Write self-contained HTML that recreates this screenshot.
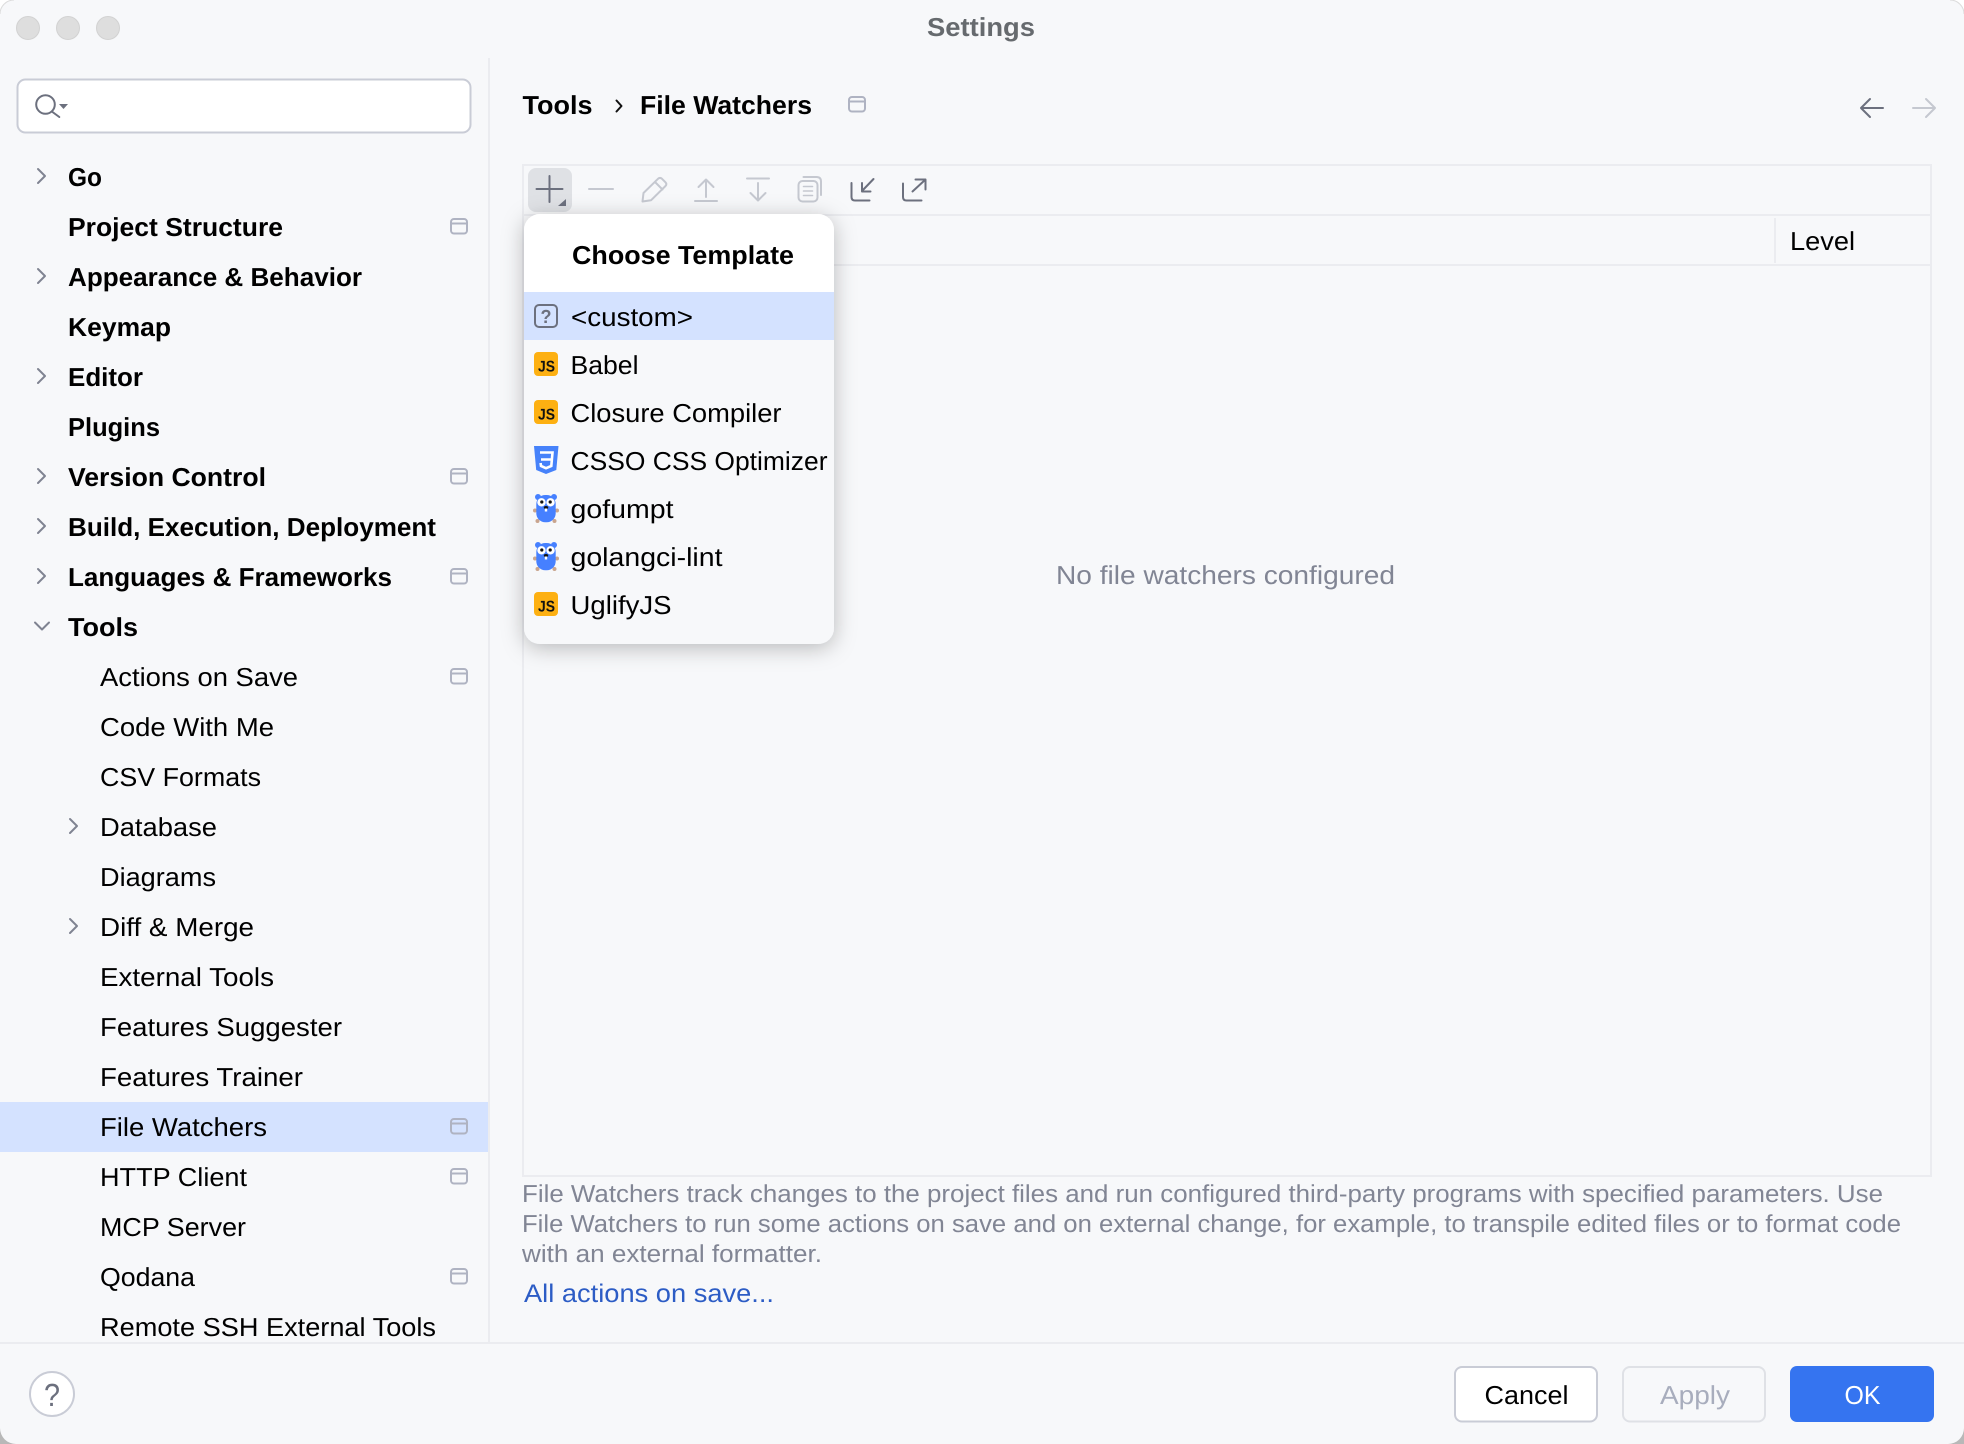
<!DOCTYPE html>
<html lang="en">
<head>
<meta charset="utf-8">
<title>Settings</title>
<style>
html,body{margin:0;padding:0;background:#f7f8fa;width:1964px;height:1444px;overflow:hidden}
svg{display:block}
text{font-family:"Liberation Sans",sans-serif;font-size:26px;fill:#000;text-rendering:geometricPrecision}
.b{font-weight:700}
.g{fill:#818594}
.d{font-size:24.5px;fill:#818594}
.ico{fill:none;stroke:#6c707e;stroke-width:2;stroke-linecap:round;stroke-linejoin:round}
.dis{fill:none;stroke:#c5c8d0;stroke-width:2;stroke-linecap:round;stroke-linejoin:round}
.chev{fill:none;stroke:#7f8391;stroke-width:2;stroke-linecap:round;stroke-linejoin:round}
.bm{fill:none;stroke:#afb3c2;stroke-width:2}
.sep{fill:#ebecf0}
.js{font-size:15.5px;font-weight:700;fill:#111}
</style>
</head>
<body>
<svg xmlns="http://www.w3.org/2000/svg" width="1964" height="1444" viewBox="0 0 1964 1444">
<defs>
<filter id="sh" x="-20%" y="-20%" width="140%" height="140%">
<feDropShadow dx="0" dy="4" stdDeviation="11" flood-color="#000" flood-opacity=".26"/>
</filter>
</defs>
<rect width="1964" height="1444" fill="#f7f8fa"/>

<!-- window corners -->
<path d="M0 0H14A14 14 0 0 0 0 14Z" fill="#fff"/>
<path d="M14 0A14 14 0 0 0 0 14" fill="none" stroke="#dcdcdc"/>
<path d="M1964 0H1950A14 14 0 0 1 1964 14Z" fill="#fff"/>
<path d="M1950 0A14 14 0 0 1 1964 14" fill="none" stroke="#dcdcdc"/>
<path d="M0 1444H16A16 16 0 0 1 0 1428Z" fill="#b8b8b8"/>
<path d="M1964 1444H1948A16 16 0 0 0 1964 1428Z" fill="#b8b8b8"/>

<!-- traffic lights -->
<circle cx="28" cy="28" r="11.5" fill="#dedede" stroke="#d2d2d2"/>
<circle cx="68" cy="28" r="11.5" fill="#dedede" stroke="#d2d2d2"/>
<circle cx="108" cy="28" r="11.5" fill="#dedede" stroke="#d2d2d2"/>
<text class="b" x="927" y="36" textLength="108" lengthAdjust="spacingAndGlyphs" style="fill:#666a6e">Settings</text>

<!-- separators -->
<rect class="sep" x="488" y="58" width="2" height="1285"/>
<rect class="sep" x="0" y="1342" width="1964" height="2"/>

<!-- search -->
<rect x="17.5" y="79.5" width="453" height="53" rx="8" fill="#fff" stroke="#c9ccd6" stroke-width="2"/>
<circle cx="45.500" cy="104.500" r="9.300" class="ico"/>
<path d="M52.500 112L59.300 117" class="ico"/>
<path d="M59 104H68L63.500 109Z" fill="#6c707e"/>

<!-- selected row -->
<rect x="0" y="1102" width="488" height="50" fill="#d4e2ff"/>

<!-- tree -->
<text class="b" x="68" y="186" textLength="34" lengthAdjust="spacingAndGlyphs">Go</text>
<text class="b" x="68" y="236" textLength="215" lengthAdjust="spacingAndGlyphs">Project Structure</text>
<text class="b" x="68" y="286" textLength="294" lengthAdjust="spacingAndGlyphs">Appearance &amp; Behavior</text>
<text class="b" x="68" y="336" textLength="103" lengthAdjust="spacingAndGlyphs">Keymap</text>
<text class="b" x="68" y="386" textLength="75" lengthAdjust="spacingAndGlyphs">Editor</text>
<text class="b" x="68" y="436" textLength="92" lengthAdjust="spacingAndGlyphs">Plugins</text>
<text class="b" x="68" y="486" textLength="198" lengthAdjust="spacingAndGlyphs">Version Control</text>
<text class="b" x="68" y="536" textLength="368" lengthAdjust="spacingAndGlyphs">Build, Execution, Deployment</text>
<text class="b" x="68" y="586" textLength="324" lengthAdjust="spacingAndGlyphs">Languages &amp; Frameworks</text>
<text class="b" x="68" y="636" textLength="70" lengthAdjust="spacingAndGlyphs">Tools</text>
<text x="100" y="686" textLength="198" lengthAdjust="spacingAndGlyphs">Actions on Save</text>
<text x="100" y="736" textLength="174" lengthAdjust="spacingAndGlyphs">Code With Me</text>
<text x="100" y="786" textLength="161" lengthAdjust="spacingAndGlyphs">CSV Formats</text>
<text x="100" y="836" textLength="117" lengthAdjust="spacingAndGlyphs">Database</text>
<text x="100" y="886" textLength="116" lengthAdjust="spacingAndGlyphs">Diagrams</text>
<text x="100" y="936" textLength="154" lengthAdjust="spacingAndGlyphs">Diff &amp; Merge</text>
<text x="100" y="986" textLength="174" lengthAdjust="spacingAndGlyphs">External Tools</text>
<text x="100" y="1036" textLength="242" lengthAdjust="spacingAndGlyphs">Features Suggester</text>
<text x="100" y="1086" textLength="203" lengthAdjust="spacingAndGlyphs">Features Trainer</text>
<text x="100" y="1136" textLength="167" lengthAdjust="spacingAndGlyphs">File Watchers</text>
<text x="100" y="1186" textLength="147" lengthAdjust="spacingAndGlyphs">HTTP Client</text>
<text x="100" y="1236" textLength="146" lengthAdjust="spacingAndGlyphs">MCP Server</text>
<text x="100" y="1286" textLength="95" lengthAdjust="spacingAndGlyphs">Qodana</text>
<text x="100" y="1336" textLength="336" lengthAdjust="spacingAndGlyphs">Remote SSH External Tools</text>

<!-- chevrons -->
<path class="chev" d="M38 169L45 176L38 183"/>
<path class="chev" d="M38 269L45 276L38 283"/>
<path class="chev" d="M38 369L45 376L38 383"/>
<path class="chev" d="M38 469L45 476L38 483"/>
<path class="chev" d="M38 519L45 526L38 533"/>
<path class="chev" d="M38 569L45 576L38 583"/>
<path class="chev" d="M35 622.5L42 629.5L49 622.5"/>
<path class="chev" d="M70 819L77 826L70 833"/>
<path class="chev" d="M70 919L77 926L70 933"/>

<!-- bookmark icons -->
<g class="bm">
<rect x="451" y="219" width="16" height="14.5" rx="3"/><path d="M451 223.5H467"/>
<rect x="451" y="469" width="16" height="14.5" rx="3"/><path d="M451 473.5H467"/>
<rect x="451" y="569" width="16" height="14.5" rx="3"/><path d="M451 573.5H467"/>
<rect x="451" y="669" width="16" height="14.5" rx="3"/><path d="M451 673.5H467"/>
<rect x="451" y="1119" width="16" height="14.5" rx="3"/><path d="M451 1123.5H467"/>
<rect x="451" y="1169" width="16" height="14.5" rx="3"/><path d="M451 1173.5H467"/>
<rect x="451" y="1269" width="16" height="14.5" rx="3"/><path d="M451 1273.5H467"/>
<rect x="849" y="97" width="16" height="14.5" rx="3"/><path d="M849 101.5H865"/>
</g>

<!-- header -->
<text class="b" x="522.5" y="114" textLength="70" lengthAdjust="spacingAndGlyphs">Tools</text>
<path d="M616.5 100.500L621.500 106L616.500 111.500" fill="none" stroke="#111" stroke-width="2" stroke-linecap="round" stroke-linejoin="round"/>
<text class="b" x="640" y="114" textLength="172" lengthAdjust="spacingAndGlyphs">File Watchers</text>
<path class="ico" d="M1861 108H1883M1870 99L1861 108L1870 117"/>
<path class="dis" d="M1913 108H1935M1926 99L1935 108L1926 117"/>

<!-- table frame -->
<rect x="523" y="165" width="1408" height="1011" fill="none" stroke="#ebecf0" stroke-width="2"/>
<rect class="sep" x="523" y="214" width="1408" height="2"/>
<rect class="sep" x="523" y="264" width="1408" height="2"/>
<rect class="sep" x="1774" y="218" width="2" height="45"/>
<text x="1790" y="250" textLength="65" lengthAdjust="spacingAndGlyphs">Level</text>

<text class="g" x="1056" y="584" textLength="339" lengthAdjust="spacingAndGlyphs">No file watchers configured</text>

<!-- toolbar -->
<rect x="528" y="168" width="44" height="44" rx="8" fill="#dfe1e5"/>
<path d="M536.5 189H562.5M549.5 176V202" class="ico"/>
<path d="M566 199V206H558Z" fill="#6c707e"/>
<path d="M589 189H613" class="dis"/>
<path class="dis" d="M642.5 201.5L643.5 193L658 178.8Q660 177 662 178.8L665.5 182.3Q667.2 184.2 665.5 186L651 200.3Z M655 182L662.5 189.5"/>
<path class="dis" d="M695 201H717M706 197V180M698.5 187L706 179.5L713.5 187"/>
<path class="dis" d="M747 178.5H769M758 183V200.5M750.5 193L758 200.5L765.5 193"/>
<g class="dis">
<rect x="798.500" y="181" width="19" height="20.500" rx="4"/>
<path d="M803.500 177H816.500Q821 177 821 181.500V195"/>
<path d="M803.500 186.500H812.500M803.500 191H812.500M803.500 195.500H812.500" stroke-width="1.600"/>
</g>
<path class="ico" d="M851.5 183V197Q851.5 200.5 855 200.5H869.5M873.5 179L862 191M862 183V191.5H870.5"/>
<path class="ico" d="M903 183.5V197Q903 200.5 906.500 200.5H921.500M912.500 191.500L925.500 179.500M915.500 179.500H925.500V189.500"/>

<!-- description -->
<text class="d" x="522" y="1202" textLength="1361" lengthAdjust="spacingAndGlyphs">File Watchers track changes to the project files and run configured third-party programs with specified parameters. Use</text>
<text class="d" x="522" y="1232" textLength="1379" lengthAdjust="spacingAndGlyphs">File Watchers to run some actions on save and on external change, for example, to transpile edited files or to format code</text>
<text class="d" x="522" y="1262" textLength="300" lengthAdjust="spacingAndGlyphs">with an external formatter.</text>
<text x="524" y="1302" textLength="250" lengthAdjust="spacingAndGlyphs" style="font-size:25.500px;fill:#2c5cc5">All actions on save...</text>

<!-- popup -->
<rect x="524" y="214" width="310" height="430" rx="16" fill="#f7f8fa" filter="url(#sh)"/>
<path d="M524 292V230A16 16 0 0 1 540 214H818A16 16 0 0 1 834 230V292Z" fill="#fff"/>
<rect x="524" y="292" width="310" height="48" fill="#d4e2ff"/>
<text class="b" x="572" y="264" textLength="222" lengthAdjust="spacingAndGlyphs">Choose Template</text>

<rect x="535" y="305" width="22" height="22" rx="4" fill="none" stroke="#6c707e" stroke-width="2"/>
<text class="b" x="540.500" y="323" textLength="11" lengthAdjust="spacingAndGlyphs" style="font-size:19px;fill:#6c707e">?</text>
<text x="571" y="326" textLength="122" lengthAdjust="spacingAndGlyphs">&lt;custom&gt;</text>

<rect x="534" y="352" width="24" height="24" rx="4" fill="#fdb012"/>
<text class="js" x="538" y="371.500" textLength="17" lengthAdjust="spacingAndGlyphs">JS</text>
<text x="570.500" y="374" textLength="68" lengthAdjust="spacingAndGlyphs">Babel</text>

<rect x="534" y="400" width="24" height="24" rx="4" fill="#fdb012"/>
<text class="js" x="538" y="419.500" textLength="17" lengthAdjust="spacingAndGlyphs">JS</text>
<text x="570.500" y="422" textLength="211" lengthAdjust="spacingAndGlyphs">Closure Compiler</text>

<path d="M534 446H558.500L556.300 470L546 474L536.200 470Z" fill="#4682fa"/>
<path d="M540 452.500H552.500L551.300 466L546 468.200L541 466L540.600 463M541 459.500H551.500" fill="none" stroke="#fff" stroke-width="2.600"/>
<text x="570.500" y="470" textLength="257" lengthAdjust="spacingAndGlyphs">CSSO CSS Optimizer</text>

<!-- gopher 1 -->
<g>
<circle cx="535" cy="510.500" r="2" fill="#c9a58f"/><circle cx="557" cy="510.500" r="2" fill="#c9a58f"/>
<circle cx="537.500" cy="521" r="2" fill="#c9a58f"/><circle cx="554.500" cy="521" r="2" fill="#c9a58f"/>
<circle cx="538" cy="497" r="3" fill="#4680ff"/><circle cx="554" cy="497" r="3" fill="#4680ff"/>
<rect x="536.300" y="495" width="19.400" height="27.300" rx="9" fill="#4680ff"/>
<circle cx="541.500" cy="502.300" r="4.200" fill="#fff"/><circle cx="550.500" cy="502.300" r="4.200" fill="#fff"/>
<circle cx="541.800" cy="502" r="1.600" fill="#111"/><circle cx="550.200" cy="502" r="1.600" fill="#111"/>
<ellipse cx="546" cy="507.500" rx="2.200" ry="1.500" fill="#111"/>
<rect x="544.800" y="508.500" width="2.400" height="3" fill="#fff"/>
</g>
<text x="570.500" y="518" textLength="103" lengthAdjust="spacingAndGlyphs">gofumpt</text>

<!-- gopher 2 -->
<g>
<circle cx="535" cy="558.500" r="2" fill="#c9a58f"/><circle cx="557" cy="558.500" r="2" fill="#c9a58f"/>
<circle cx="537.500" cy="569" r="2" fill="#c9a58f"/><circle cx="554.500" cy="569" r="2" fill="#c9a58f"/>
<circle cx="538" cy="545" r="3" fill="#4680ff"/><circle cx="554" cy="545" r="3" fill="#4680ff"/>
<rect x="536.300" y="543" width="19.400" height="27.300" rx="9" fill="#4680ff"/>
<circle cx="541.500" cy="550.300" r="4.200" fill="#fff"/><circle cx="550.500" cy="550.300" r="4.200" fill="#fff"/>
<circle cx="541.800" cy="550" r="1.600" fill="#111"/><circle cx="550.200" cy="550" r="1.600" fill="#111"/>
<ellipse cx="546" cy="555.500" rx="2.200" ry="1.500" fill="#111"/>
<rect x="544.800" y="556.500" width="2.400" height="3" fill="#fff"/>
</g>
<text x="570.500" y="566" textLength="152" lengthAdjust="spacingAndGlyphs">golangci-lint</text>

<rect x="534" y="592" width="24" height="24" rx="4" fill="#fdb012"/>
<text class="js" x="538" y="611.500" textLength="17" lengthAdjust="spacingAndGlyphs">JS</text>
<text x="570.500" y="614" textLength="101" lengthAdjust="spacingAndGlyphs">UglifyJS</text>

<!-- footer -->
<circle cx="52" cy="1394" r="22" fill="#fff" stroke="#c9ccd6" stroke-width="2"/>
<text x="44" y="1406" textLength="16" lengthAdjust="spacingAndGlyphs" style="font-size:32px;fill:#6c707e">?</text>

<rect x="1455" y="1367" width="142" height="54.500" rx="7" fill="#fff" stroke="#c9ccd6" stroke-width="2"/>
<text x="1484.500" y="1404" textLength="84" lengthAdjust="spacingAndGlyphs">Cancel</text>
<rect x="1623" y="1367" width="142" height="54.500" rx="7" fill="none" stroke="#dfe1e6" stroke-width="2"/>
<text x="1660" y="1404" textLength="70" lengthAdjust="spacingAndGlyphs" style="fill:#a8adbd">Apply</text>
<rect x="1790" y="1366" width="144" height="56" rx="7" fill="#3574f0"/>
<text x="1844.500" y="1404" textLength="36" lengthAdjust="spacingAndGlyphs" style="fill:#fff">OK</text>
</svg>
</body>
</html>
